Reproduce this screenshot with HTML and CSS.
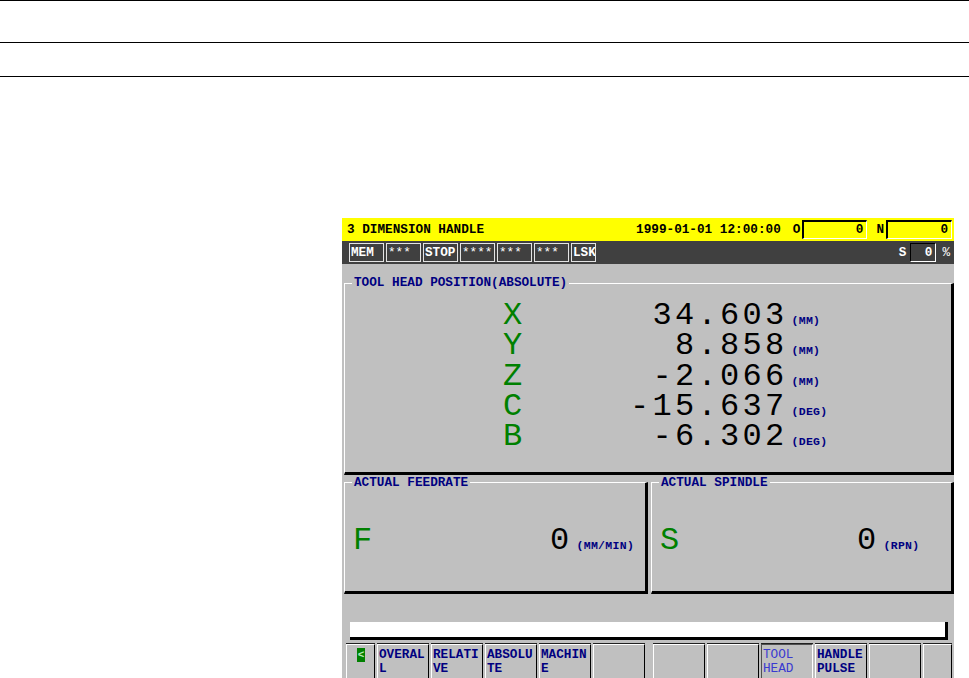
FILE: index.html
```html
<!DOCTYPE html>
<html lang="en">
<head>
    <meta charset="UTF-8">
    <meta name="viewport" content="width=device-width, initial-scale=1.0">
    <title>3 Dimension Handle</title>
    <link rel="stylesheet" href="styles.css">
</head>
<body>

    <div class="rules">
        <div class="rule"></div>
        <div class="rule second"></div>
        <div class="rule last"></div>
    </div>

    <div class="screen">
        <!-- title line -->
        <div class="title-bar">
            <span class="mode-name">3 DIMENSION HANDLE</span>
            <span class="clock">1999-01-01 12:00:00</span>
            <span class="reg-label">O</span>
            <span class="reg-box o-box">0</span>
            <span class="reg-label">N</span>
            <span class="reg-box n-box">0</span>
        </div>

        <!-- status line -->
        <div class="status-bar">
            <span class="stat">MEM</span>
            <span class="stat stars">***</span>
            <span class="stat">STOP</span>
            <span class="stat stars">****</span>
            <span class="stat stars">***</span>
            <span class="stat stars">***</span>
            <span class="stat lsk">LSK</span>
            <span class="spindle-label">S</span>
            <span class="spindle-box">0</span>
            <span class="pct">%</span>
        </div>

        <fieldset class="panel main-panel">
            <legend>TOOL HEAD POSITION(ABSOLUTE)</legend>
            <div class="axis-grid">
                <span class="axis">X</span><span class="value">34.603</span><span class="unit">(MM)</span>
                <span class="axis">Y</span><span class="value">8.858</span><span class="unit">(MM)</span>
                <span class="axis">Z</span><span class="value">-2.066</span><span class="unit">(MM)</span>
                <span class="axis">C</span><span class="value">-15.637</span><span class="unit">(DEG)</span>
                <span class="axis">B</span><span class="value">-6.302</span><span class="unit">(DEG)</span>
            </div>
        </fieldset>

        <div class="panel-row">
            <fieldset class="panel feed-panel">
                <legend>ACTUAL FEEDRATE</legend>
                <div class="readout">
                    <span class="axis">F</span><span class="value">0</span><span class="unit">(MM/MIN)</span>
                </div>
            </fieldset>
            <fieldset class="panel spindle-panel">
                <legend>ACTUAL SPINDLE</legend>
                <div class="readout">
                    <span class="axis">S</span><span class="value">0</span><span class="unit">(RPN)</span>
                </div>
            </fieldset>
        </div>

        <div class="message-line"></div>

        <!-- soft keys -->
        <div class="soft-keys">
            <div class="key side"><span class="prev-mark">&lt;</span></div>
            <div class="key">OVERAL<br>L</div>
            <div class="key">RELATI<br>VE</div>
            <div class="key">ABSOLU<br>TE</div>
            <div class="key">MACHIN<br>E</div>
            <div class="key"></div>
            <div class="key group-start"></div>
            <div class="key"></div>
            <div class="key pressed">TOOL<br>HEAD</div>
            <div class="key">HANDLE<br>PULSE</div>
            <div class="key"></div>
            <div class="key side"></div>
        </div>
    </div>

</body>
</html>
```

FILE: styles.css
```css
body {
    margin: 0;
    background-color: white;
    font-family: 'Liberation Mono', 'DejaVu Sans Mono', monospace;
    overflow: hidden;
    height: 678px;
}

/* page rules at the top */
.rule {
    border-top: 1px solid #000;
    height: 41px;
}

.rule.second {
    height: 33px;
}

.rule.last {
    height: 0;
}

.screen {
    margin: 141px 0 0 342px;
    width: 612px;
    height: 460px;
    background-color: #c0c0c0;
    overflow: hidden;
    font-size: 12.7px;
    font-weight: bold;
}

/* title line */
.title-bar {
    display: flex;
    align-items: center;
    height: 23px;
    padding: 0 2px 0 5px;
    background-color: #ffff00;
    color: #000;
}

.clock {
    margin-left: auto;
    margin-right: 12px;
}

.reg-label {
    margin-right: 2px;
}

.reg-box {
    box-sizing: border-box;
    height: 19px;
    line-height: 16px;
    text-align: right;
    padding-right: 3px;
    border-style: solid;
    border-width: 2px 1px 1px 2px;
    border-color: #000 #fff #fff #000;
}

.o-box {
    width: 65px;
    margin-right: 9px;
}

.n-box {
    width: 66px;
}

/* status line */
.status-bar {
    display: flex;
    align-items: center;
    gap: 2px;
    height: 23px;
    padding: 0 4px 0 7px;
    background-color: #404040;
    color: #fff;
}

.stat {
    box-sizing: border-box;
    width: 35px;
    height: 19px;
    line-height: 17px;
    padding-left: 1px;
    border: 1px solid #e4e4e4;
    overflow: hidden;
}

.stat.stars {
    font-weight: normal;
}

.stat.lsk {
    width: 25px;
}

.spindle-label {
    margin-left: auto;
    margin-right: 2px;
}

.spindle-box {
    box-sizing: border-box;
    width: 26px;
    height: 19px;
    line-height: 17px;
    text-align: right;
    padding-right: 3px;
    border: 1px solid;
    border-color: #000 #fff #fff #000;
}

.pct {
    margin-left: 4px;
    font-weight: normal;
}

/* group boxes */
.panel {
    box-sizing: border-box;
    margin: 0;
    padding: 0;
    min-width: 0;
    border-style: solid;
    border-width: 1px 3px 3px 1px;
    border-color: #fff #000 #000 #fff;
}

.panel legend {
    margin-left: 7px;
    padding: 0 2px;
    line-height: 12px;
    color: #000080;
}

.main-panel {
    margin: 13px 0 0 2px;
    width: 610px;
}

.axis,
.value {
    font-weight: normal;
    font-size: 32px;
    letter-spacing: 3.3px;
}

.axis {
    color: #008000;
}

.value {
    color: #000;
    text-align: right;
}

.unit {
    color: #000080;
    font-size: 11.5px;
    letter-spacing: 0.3px;
    line-height: 12px;
    padding-left: 4px;
}

.axis-grid {
    display: grid;
    grid-template-columns: 22.5px 262px auto;
    grid-auto-rows: 30.3px;
    align-items: baseline;
    line-height: 30.3px;
    padding: 12px 0 19.5px 158px;
}

.panel-row {
    display: flex;
    gap: 3px;
    margin: 2px 0 0 2px;
}

.feed-panel {
    width: 304px;
}

.spindle-panel {
    width: 303px;
}

.readout {
    display: grid;
    grid-template-columns: 22.5px 197px auto;
    grid-auto-rows: 36px;
    align-items: baseline;
    line-height: 36px;
    padding: 34px 0 32px 8px;
}

.message-line {
    box-sizing: border-box;
    margin: 28px 0 0 8px;
    width: 598px;
    height: 18px;
    background-color: #fff;
    border-right: 3px solid #000;
    border-bottom: 3px solid #000;
}

/* soft keys */
.soft-keys {
    display: flex;
    gap: 2px;
    margin-top: 4px;
    padding: 0 2px 0 4px;
}

.key {
    box-sizing: border-box;
    flex: 1;
    height: 38px;
    padding: 3px 0 0 1px;
    line-height: 14px;
    color: #000080;
    white-space: nowrap;
    overflow: hidden;
    border: 1px solid;
    border-color: #fff #000 #000 #fff;
    box-shadow: 0 -1px 0 #202020;
}

.key.side {
    flex: 0 0 29px;
}

.key.group-start {
    margin-left: 6px;
}

.key.pressed {
    border-color: #505050 #fff #fff #505050;
    color: #3a3ad0;
    font-weight: normal;
}

.prev-mark {
    display: inline-block;
    width: 8px;
    height: 14px;
    margin: -1px 0 0 9px;
    background-color: #008000;
    color: #b8e8b8;
    font-size: 11px;
    line-height: 14px;
    text-align: center;
}
```
